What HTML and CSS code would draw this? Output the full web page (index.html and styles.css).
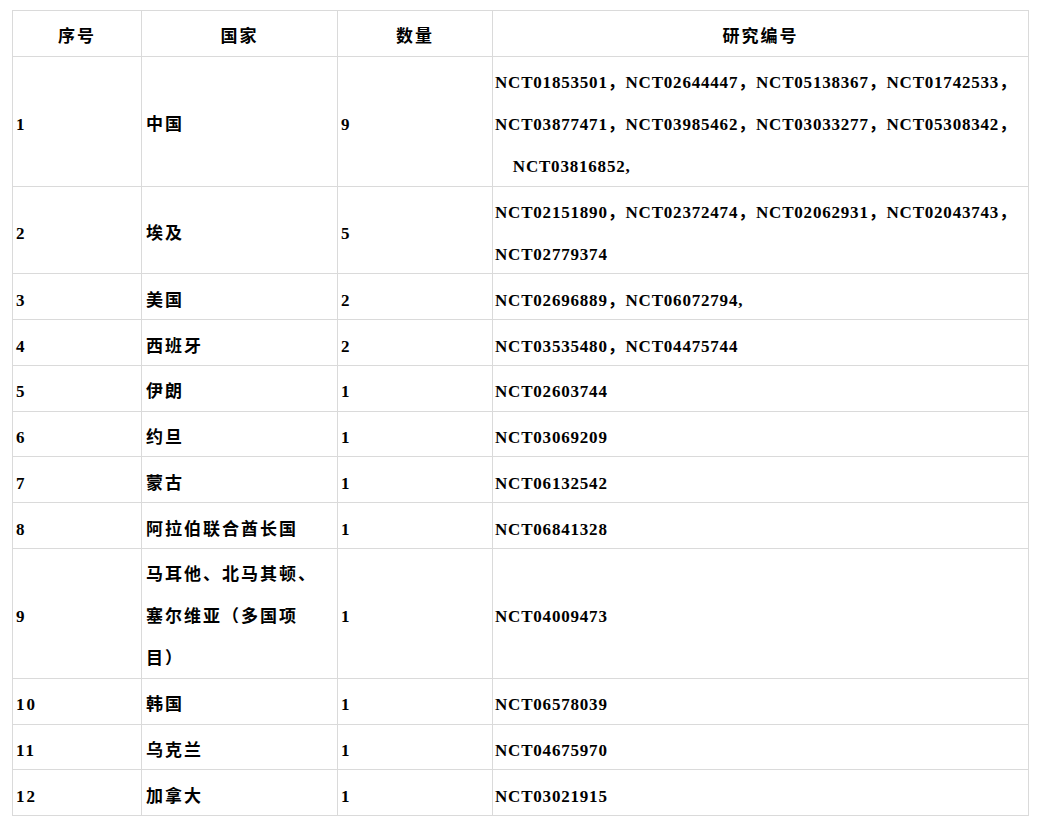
FILE: index.html
```html
<!DOCTYPE html>
<html lang="zh-CN">
<head>
<meta charset="utf-8">
<title>研究编号</title>
<link rel="stylesheet" href="styles.css">
</head>
<body>
<table class="data">
  <colgroup>
    <col class="c-no">
    <col class="c-country">
    <col class="c-count">
    <col class="c-ids">
  </colgroup>
  <thead>
    <tr><th><span class="t">序号</span></th><th><span class="t">国家</span></th><th><span class="t">数量</span></th><th><span class="t">研究编号</span></th></tr>
  </thead>
  <tbody>
    <tr><td><span class="t">1</span></td><td class="cn"><span class="t">中国</span></td><td><span class="t">9</span></td><td class="ids"><span class="t">NCT01853501，NCT02644447，NCT05138367，NCT01742533，<br>NCT03877471，NCT03985462，NCT03033277，NCT05308342，<br>　NCT03816852,</span></td></tr>
    <tr><td><span class="t">2</span></td><td class="cn"><span class="t">埃及</span></td><td><span class="t">5</span></td><td class="ids"><span class="t">NCT02151890，NCT02372474，NCT02062931，NCT02043743，<br>NCT02779374</span></td></tr>
    <tr><td><span class="t">3</span></td><td class="cn"><span class="t">美国</span></td><td><span class="t">2</span></td><td class="ids"><span class="t">NCT02696889，NCT06072794,</span></td></tr>
    <tr><td><span class="t">4</span></td><td class="cn"><span class="t">西班牙</span></td><td><span class="t">2</span></td><td class="ids"><span class="t">NCT03535480，NCT04475744</span></td></tr>
    <tr><td><span class="t">5</span></td><td class="cn"><span class="t">伊朗</span></td><td><span class="t">1</span></td><td class="ids"><span class="t">NCT02603744</span></td></tr>
    <tr><td><span class="t">6</span></td><td class="cn"><span class="t">约旦</span></td><td><span class="t">1</span></td><td class="ids"><span class="t">NCT03069209</span></td></tr>
    <tr><td><span class="t">7</span></td><td class="cn"><span class="t">蒙古</span></td><td><span class="t">1</span></td><td class="ids"><span class="t">NCT06132542</span></td></tr>
    <tr><td><span class="t">8</span></td><td class="cn"><span class="t">阿拉伯联合酋长国</span></td><td><span class="t">1</span></td><td class="ids"><span class="t">NCT06841328</span></td></tr>
    <tr><td><span class="t">9</span></td><td class="cn"><span class="t">马耳他、北马其顿、<br>塞尔维亚（多国项<br>目）</span></td><td><span class="t">1</span></td><td class="ids"><span class="t">NCT04009473</span></td></tr>
    <tr><td><span class="t">10</span></td><td class="cn"><span class="t">韩国</span></td><td><span class="t">1</span></td><td class="ids"><span class="t">NCT06578039</span></td></tr>
    <tr><td><span class="t">11</span></td><td class="cn"><span class="t">乌克兰</span></td><td><span class="t">1</span></td><td class="ids"><span class="t">NCT04675970</span></td></tr>
    <tr><td><span class="t">12</span></td><td class="cn"><span class="t">加拿大</span></td><td><span class="t">1</span></td><td class="ids"><span class="t">NCT03021915</span></td></tr>
  </tbody>
</table>
</body>
</html>
```

FILE: styles.css
```css
html, body {
  margin: 0;
  padding: 0;
  background: #ffffff;
}

body {
  padding: 10px 0 0 12px;
  font-family: "Liberation Serif", "Noto Sans CJK SC", serif;
  font-size: 17px;
  font-weight: 700;
  color: #000000;
}

.data {
  border-collapse: collapse;
  table-layout: fixed;
  width: 1016px;
}

.c-no { width: 129px; }
.c-country { width: 196px; }
.c-count { width: 155px; }
.c-ids { width: 536px; }

.data th,
.data td {
  border: 1px solid #dadada;
  padding: 1.4px 3px;
  line-height: 42px;
  letter-spacing: 2px;
  vertical-align: middle;
  text-align: left;
}

/* text sits a little below the middle of each 42px line */
.data .t {
  line-height: 30px;
  vertical-align: -4px;
}

.data th {
  text-align: center;
  font-weight: 700;
}

.data td.cn {
  padding-left: 4px;
  padding-right: 4px;
}

.data td.ids {
  letter-spacing: 0.8px;
  padding-left: 2px;
  white-space: nowrap;
}
```
